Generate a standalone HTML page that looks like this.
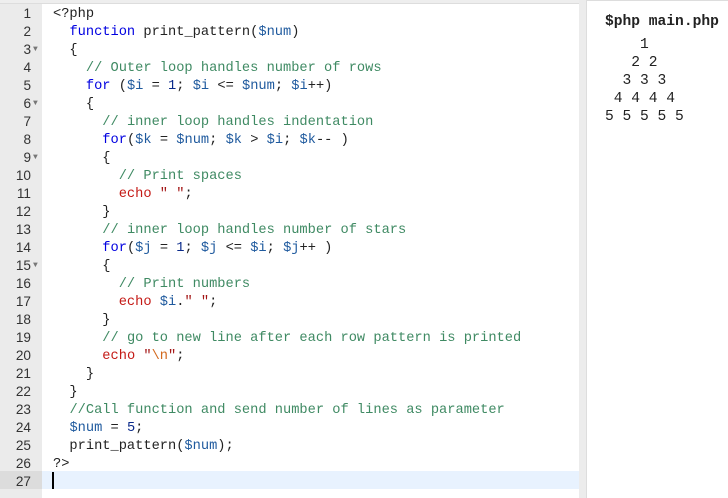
<!DOCTYPE html>
<html><head><meta charset="utf-8"><style>
body{margin:0;width:728px;height:498px;overflow:hidden;background:#fff;position:relative;font-family:"Liberation Mono",monospace;}
#top{position:absolute;left:0;top:0;width:580px;height:3px;background:#eee;border-bottom:1px solid #ddd}
#gut{position:absolute;left:0;top:4px;width:42px;height:494px;background:#ebebeb}
#sb{position:absolute;left:579px;top:0;width:7px;height:498px;background:#ececec;border-right:1px solid #ddd}
#rtop{position:absolute;left:586px;top:0;width:142px;height:1px;background:#ddd}
#hl{position:absolute;left:42px;top:471px;width:537px;height:18px;background:#e8f2fe}
#hlg{position:absolute;left:0;top:471px;width:42px;height:18px;background:#dcdcdc}
.ln{position:absolute;left:0;width:31px;text-align:right;font-size:13.6px;line-height:18px;color:#333;font-family:"Liberation Sans",sans-serif;margin-top:1px}
.f{position:absolute;left:33px;font-size:8px;color:#777;line-height:18px}
pre{position:absolute;left:53px;top:6px;margin:0;font-size:13.7px;line-height:18px;color:#222;font-family:"Liberation Mono",monospace}
.k{color:#0000e0}.v{color:#1f5a9e}.c{color:#3f8a63}.e{color:#c41a16}.s{color:#a31515}.n{color:#0a2a8a}.o{color:#d2691e}
#cur{position:absolute;left:52px;top:472px;width:2px;height:17px;background:#000}
#out{position:absolute;left:605px;top:13px;font-size:14.6px;line-height:18px;color:#222;margin:0}
#out2{position:absolute;left:605px;top:36px;font-size:14.6px;line-height:18px;color:#222;margin:0}
</style></head><body>
<div id="top"></div><div id="gut"></div><div id="hlg"></div><div id="hl"></div><div id="sb"></div><div id="rtop"></div>
<div class="ln" style="top:4px">1</div><div class="ln" style="top:22px">2</div><div class="ln" style="top:40px">3</div><div class="ln" style="top:58px">4</div><div class="ln" style="top:76px">5</div><div class="ln" style="top:94px">6</div><div class="ln" style="top:112px">7</div><div class="ln" style="top:130px">8</div><div class="ln" style="top:148px">9</div><div class="ln" style="top:166px">10</div><div class="ln" style="top:184px">11</div><div class="ln" style="top:202px">12</div><div class="ln" style="top:220px">13</div><div class="ln" style="top:238px">14</div><div class="ln" style="top:256px">15</div><div class="ln" style="top:274px">16</div><div class="ln" style="top:292px">17</div><div class="ln" style="top:310px">18</div><div class="ln" style="top:328px">19</div><div class="ln" style="top:346px">20</div><div class="ln" style="top:364px">21</div><div class="ln" style="top:382px">22</div><div class="ln" style="top:400px">23</div><div class="ln" style="top:418px">24</div><div class="ln" style="top:436px">25</div><div class="ln" style="top:454px">26</div><div class="ln" style="top:472px">27</div>
<div class="f" style="top:41px">▼</div><div class="f" style="top:95px">▼</div><div class="f" style="top:149px">▼</div><div class="f" style="top:257px">▼</div>
<pre>&lt;?php
  <span class="k">function</span> print_pattern(<span class="v">$num</span>)
  {
    <span class="c">// Outer loop handles number of rows</span>
    <span class="k">for</span> (<span class="v">$i</span> = <span class="n">1</span>; <span class="v">$i</span> &lt;= <span class="v">$num</span>; <span class="v">$i</span>++)
    {
      <span class="c">// inner loop handles indentation</span>
      <span class="k">for</span>(<span class="v">$k</span> = <span class="v">$num</span>; <span class="v">$k</span> &gt; <span class="v">$i</span>; <span class="v">$k</span>-- )
      {
        <span class="c">// Print spaces</span>
        <span class="e">echo</span> <span class="s">" "</span>;
      }
      <span class="c">// inner loop handles number of stars</span>
      <span class="k">for</span>(<span class="v">$j</span> = <span class="n">1</span>; <span class="v">$j</span> &lt;= <span class="v">$i</span>; <span class="v">$j</span>++ )
      {
        <span class="c">// Print numbers</span>
        <span class="e">echo</span> <span class="v">$i</span>.<span class="s">" "</span>;
      }
      <span class="c">// go to new line after each row pattern is printed</span>
      <span class="e">echo</span> <span class="s">"<span class="o">\n</span>"</span>;
    }
  }
  <span class="c">//Call function and send number of lines as parameter</span>
  <span class="v">$num</span> = <span class="n">5</span>;
  print_pattern(<span class="v">$num</span>);
?&gt;
</pre>
<div id="cur"></div>
<pre id="out"><b>$php main.php</b></pre>
<pre id="out2">    1 
   2 2 
  3 3 3 
 4 4 4 4 
5 5 5 5 5 </pre>
</body></html>
